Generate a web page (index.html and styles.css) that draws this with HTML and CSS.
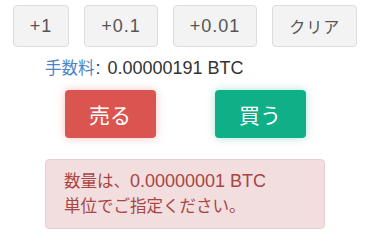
FILE: index.html
```html
<!DOCTYPE html>
<html lang="ja">
<head>
<meta charset="utf-8">
<link rel="stylesheet" href="styles.css">
</head>
<body>
<div class="page">
  <div class="steps">
    <button class="step">+1</button>
    <button class="step">+0.1</button>
    <button class="step">+0.01</button>
    <button class="step"><span class="ja">クリア</span></button>
  </div>
  <div class="panel">
    <p class="fee"><span class="ja fee-label">手数料</span><span class="colon">:</span> 0.00000191 BTC</p>
  </div>
  <div class="actions">
    <button class="act sell">売る</button>
    <button class="act buy">買う</button>
  </div>
  <div class="panel">
    <div class="alert"><span class="ja">数量は、</span>0.00000001 BTC<br><span class="ja">単位でご指定ください。</span></div>
  </div>
</div>
</body>
</html>
```

FILE: styles.css
```css
html, body {
  margin: 0;
  padding: 0;
  background: #ffffff;
}
body {
  font-family: "Liberation Sans", "Noto Sans CJK JP", sans-serif;
  font-size: 18px;
  color: #333333;
}
.page {
  width: 370px;
  padding-top: 5px;
}
.ja {
  font-family: "Noto Sans CJK JP", sans-serif;
  font-size: 16.5px;
}
.steps {
  display: flex;
  justify-content: center;
  gap: 15px;
}
.step {
  height: 42px;
  padding: 0 16px;
  border: 1px solid #dcdcdc;
  border-radius: 4px;
  background: #f3f3f3;
  color: #555555;
  font-family: "Liberation Sans", "Noto Sans CJK JP", sans-serif;
  font-size: 18px;
  letter-spacing: 1px;
  line-height: 1;
  display: flex;
  align-items: center;
  justify-content: center;
}
.step .ja {
  font-size: 16px;
}
.panel {
  width: 280px;
  margin: 0 auto;
}
.fee {
  margin: 8px 0 0;
  line-height: 24px;
  color: #333333;
}
.fee-label {
  color: #4d84c6;
}
.colon {
  margin: 0 2px 0 1px;
}
.actions {
  display: flex;
  justify-content: center;
  gap: 59px;
  margin-top: 10px;
}
.act {
  width: 91px;
  height: 48px;
  border: none;
  border-radius: 4px;
  color: #ffffff;
  font-family: "Noto Sans CJK JP", sans-serif;
  font-size: 21px;
  padding: 0;
}
.sell {
  background: #db5550;
  box-shadow: 0 0 8px rgba(219, 85, 80, 0.35);
}
.buy {
  background: #0fb087;
  box-shadow: 0 0 8px rgba(15, 176, 135, 0.35);
}
.alert {
  margin-top: 21px;
  padding: 8px 18px 10px;
  border: 1px solid #ebccd1;
  border-radius: 4px;
  background: #f2dede;
  color: #a94442;
  line-height: 24px;
}
```
